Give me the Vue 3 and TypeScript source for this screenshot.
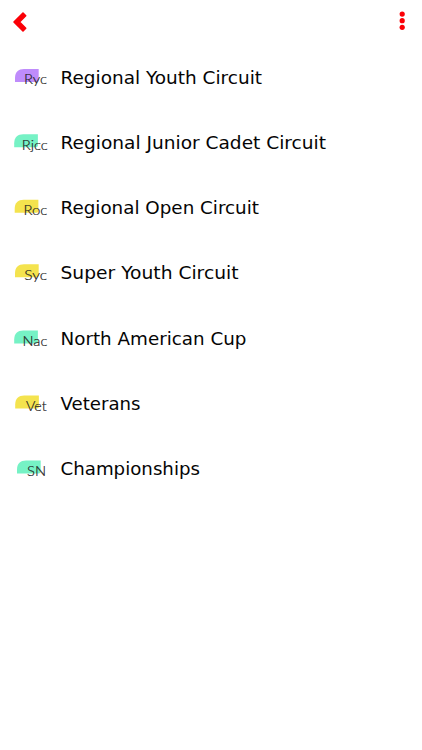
<script setup lang="ts">
interface Circuit {
  name: string
  width: number
  short: string
  shapeX: number
  shapeY: number
  textX: number
  textY: number
  textWidth: number
  color: string
}

const purple = '#bf8cfb'
const mint = '#76f2c5'
const yellow = '#f4e34e'

const circuits: Circuit[] = [
  { name: 'Regional Youth Circuit', width: 201.5, short: 'Ryc', shapeX: 15, shapeY: 7, textX: 24, textY: 22.4, textWidth: 23, color: purple },
  { name: 'Regional Junior Cadet Circuit', width: 265.5, short: 'Rjcc', shapeX: 14.2, shapeY: 7.2, textX: 21.8, textY: 22.6, textWidth: 26, color: mint },
  { name: 'Regional Open Circuit', width: 198.5, short: 'Roc', shapeX: 14.7, shapeY: 7.8, textX: 23.4, textY: 23, textWidth: 23.9, color: yellow },
  { name: 'Super Youth Circuit', width: 178, short: 'Syc', shapeX: 15, shapeY: 7.2, textX: 24.3, textY: 22.5, textWidth: 22.7, color: yellow },
  { name: 'North American Cup', width: 186, short: 'Nac', shapeX: 14.2, shapeY: 7.5, textX: 22.6, textY: 22.9, textWidth: 24.7, color: mint },
  { name: 'Veterans', width: 80, short: 'Vet', shapeX: 15.2, shapeY: 7.5, textX: 26, textY: 23, textWidth: 20.7, color: yellow },
  { name: 'Championships', width: 139.5, short: 'SN', shapeX: 17, shapeY: 7.5, textX: 27.1, textY: 22.8, textWidth: 19, color: mint },
]
</script>

<template>
  <main class="screen">
    <header class="bar">
      <button class="icon-button" aria-label="Back">
        <svg width="16" height="22" viewBox="0 0 16 22">
          <path
            d="M11 2 L13.7 4.7 L7.5 11 L13.7 17.3 L11 20 L2 11 Z"
            fill="#fb0007"
            stroke="#fb0007"
            stroke-width="1.6"
            stroke-linejoin="round"
          />
        </svg>
      </button>
      <button class="icon-button" aria-label="More options">
        <svg width="6" height="22" viewBox="0 0 6 22" fill="#fb0007">
          <circle cx="3.2" cy="3.1" r="2.6" />
          <circle cx="3.2" cy="9.7" r="2.6" />
          <circle cx="3.2" cy="16.3" r="2.6" />
        </svg>
      </button>
    </header>
    <ul class="list">
      <li v-for="c in circuits" :key="c.short" class="row">
        <svg class="badge" width="60" height="30" viewBox="0 0 60 30">
          <path
            :transform="`translate(${c.shapeX} ${c.shapeY})`"
            d="M0 13 V9 C0 3 3.5 0 9 0 H23.7 V11 Q23.7 13 21.7 13 Z"
            :fill="c.color"
          />
          <text :x="c.textX" :y="c.textY" :textLength="c.textWidth" lengthAdjust="spacingAndGlyphs">{{ c.short }}</text>
        </svg>
        <svg class="name" width="300" height="30" viewBox="0 0 300 30">
          <text x="0.5" y="22.2" :textLength="c.width" lengthAdjust="spacingAndGlyphs">{{ c.name }}</text>
        </svg>
      </li>
    </ul>
  </main>
</template>

<style>
body {
  background: #fff;
}
</style>

<style scoped>
.screen {
  min-height: 750px;
  background: #fff;
  overflow: hidden;
}
.bar {
  display: flex;
  justify-content: space-between;
  align-items: center;
  height: 44px;
  padding: 0 17px 0 12px;
  box-sizing: border-box;
}
.icon-button {
  display: flex;
  padding: 0;
  border: 0;
  background: none;
}
.list {
  list-style: none;
  margin: 0;
  padding: 0;
}
.row {
  display: flex;
  align-items: center;
  height: 65.26px;
}
.badge {
  flex: none;
  font-family: Lato, "Open Sans", sans-serif;
  font-size: 13.4px;
  font-weight: 300;
  fill: #222;
}
.badge text {
  stroke: #222;
  stroke-width: 0.2px;
}
.name {
  flex: none;
  font-family: "DejaVu Sans", Verdana, sans-serif;
  font-size: 18.4px;
  fill: #050505;
}
</style>
